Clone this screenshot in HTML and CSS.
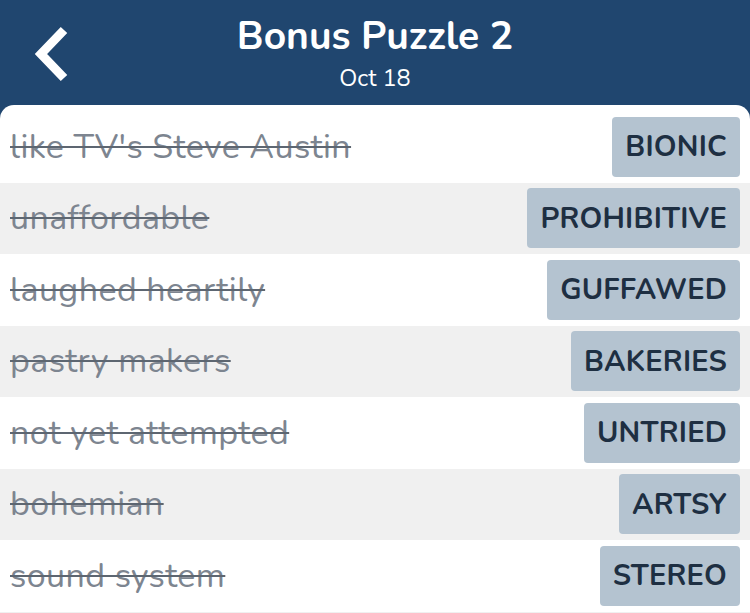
FILE: index.html
```html
<!DOCTYPE html>
<html>
<head>
<meta charset="utf-8">
<link rel="stylesheet" href="styles.css">
</head>
<body>
<div class="app">
  <header class="topbar">
    <svg class="back" width="40" height="56" viewBox="0 0 40 56">
      <polyline points="31,4 8,28 31,52" fill="none" stroke="#fff" stroke-width="9" stroke-linecap="butt" stroke-linejoin="miter"/>
    </svg>
    <div class="titles">
      <div class="title">Bonus Puzzle 2</div>
      <div class="date">Oct 18</div>
    </div>
  </header>
  <main class="card">
    <div class="row"><span class="clue">like TV's Steve Austin</span><span class="answer">BIONIC</span></div>
    <div class="row alt"><span class="clue">unaffordable</span><span class="answer">PROHIBITIVE</span></div>
    <div class="row"><span class="clue">laughed heartily</span><span class="answer">GUFFAWED</span></div>
    <div class="row alt"><span class="clue">pastry makers</span><span class="answer">BAKERIES</span></div>
    <div class="row"><span class="clue">not yet attempted</span><span class="answer">UNTRIED</span></div>
    <div class="row alt"><span class="clue">bohemian</span><span class="answer">ARTSY</span></div>
    <div class="row"><span class="clue">sound system</span><span class="answer">STEREO</span></div>
    <div class="row alt"></div>
  </main>
</div>
</body>
</html>
```
FILE: styles.css
```css
html, body {
  margin: 0;
  padding: 0;
  height: 100%;
  overflow: hidden;
}
body {
  background: #20466f;
  font-family: "Nunito", "Lato", "Noto Sans", sans-serif;
}
.app {
  display: flex;
  flex-direction: column;
  height: 100%;
}
.topbar {
  position: relative;
  height: 105px;
  display: flex;
  align-items: flex-start;
  justify-content: center;
  color: #fff;
  flex-shrink: 0;
}
.back {
  position: absolute;
  left: 33px;
  top: 26px;
}
.titles {
  display: flex;
  flex-direction: column;
  align-items: center;
  padding-top: 14px;
}
.title {
  font-size: 39px;
  font-weight: 700;
  line-height: 46px;
}
.date {
  font-size: 23.5px;
  line-height: 28px;
  margin-top: 4px;
}
.card {
  flex: 1;
  background: #fff;
  border-radius: 14px 14px 0 0;
  padding-top: 6px;
  overflow: hidden;
}
.row {
  height: 71.5px;
  display: flex;
  align-items: center;
  justify-content: space-between;
  padding: 0 10px;
  box-sizing: border-box;
}
.row.alt {
  background: #f0f0f0;
}
.clue {
  font-size: 34px;
  letter-spacing: 0.4px;
  color: #7d8590;
  text-decoration: line-through;
  text-decoration-color: #5d6671;
  text-decoration-thickness: 2px;
}
.answer {
  background: #b4c3d0;
  color: #1e2f42;
  font-weight: 700;
  font-size: 29px;
  height: 60px;
  display: flex;
  align-items: center;
  padding: 0 13px;
  border-radius: 4px;
  letter-spacing: 0.2px;
}
```
